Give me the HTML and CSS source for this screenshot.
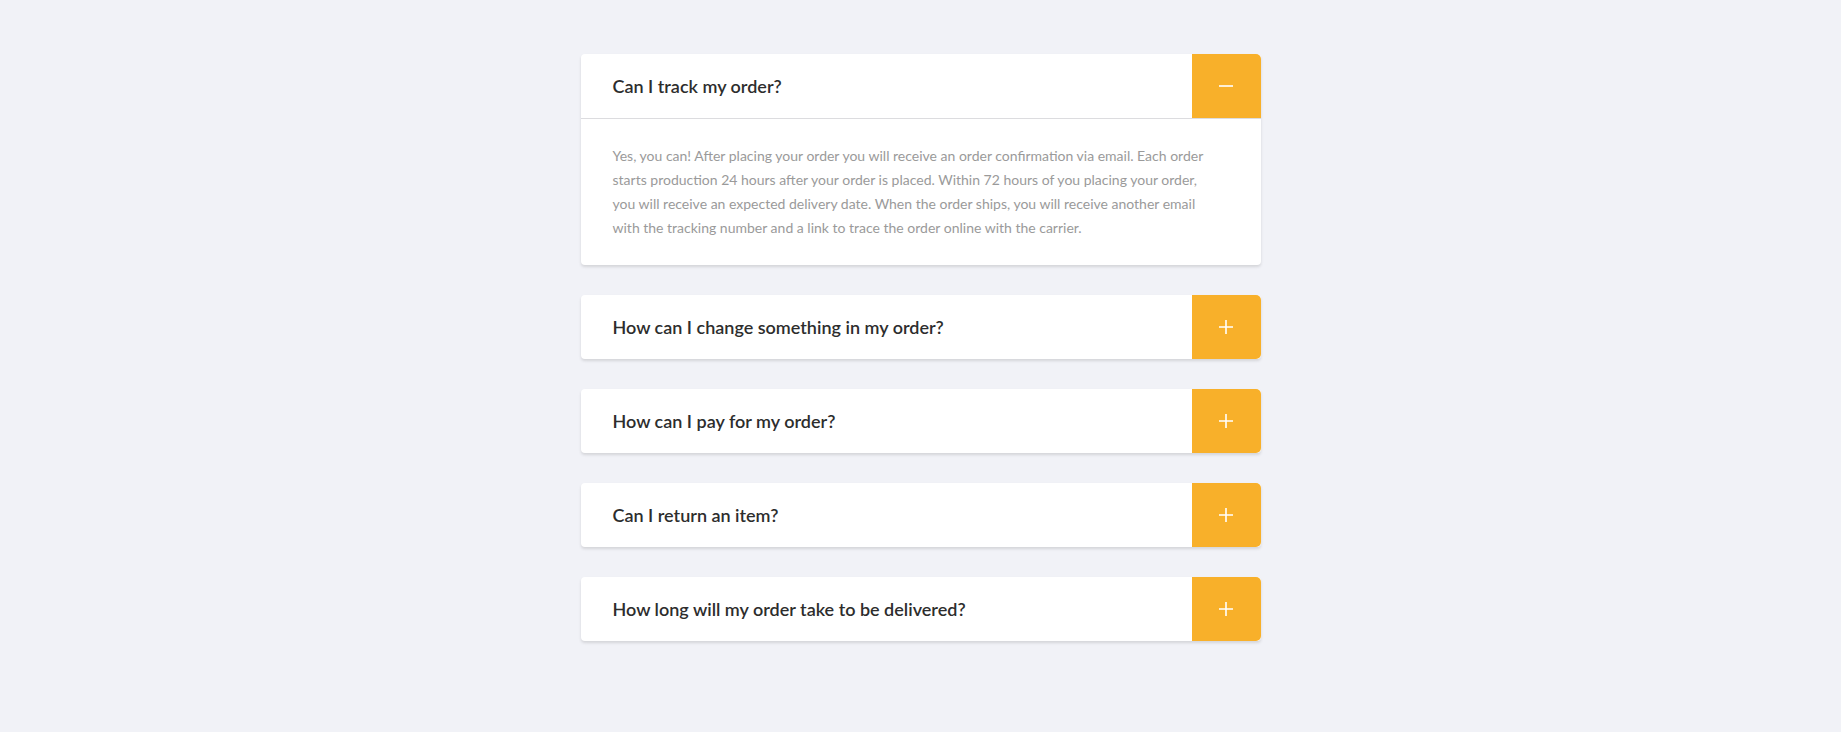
FILE: index.html
```html
<!DOCTYPE html>
<html lang="en">
<head>
<meta charset="utf-8">
<title>FAQ</title>
<link rel="stylesheet" href="styles.css">
</head>
<body>
<main class="faq">
  <section class="card open">
    <div class="card-head">
      <h3 class="q">Can I track my order?</h3>
      <button class="toggle" aria-label="Collapse">
        <svg width="14" height="14" viewBox="0 0 14 14"><path d="M0 7h14" stroke="#fff" stroke-width="1.6"/></svg>
      </button>
    </div>
    <div class="card-body">
      <p>Yes, you can! After placing your order you will receive an order confirmation via email. Each order starts production 24 hours after your order is placed. Within 72 hours of you placing your order, you will receive an expected delivery date. When the order ships, you will receive another email with the tracking number and a link to trace the order online with the carrier.</p>
    </div>
  </section>
  <section class="card">
    <div class="card-head">
      <h3 class="q">How can I change something in my order?</h3>
      <button class="toggle" aria-label="Expand">
        <svg width="14" height="14" viewBox="0 0 14 14"><path d="M0 7h14M7 0v14" stroke="#fff" stroke-width="1.6"/></svg>
      </button>
    </div>
  </section>
  <section class="card">
    <div class="card-head">
      <h3 class="q">How can I pay for my order?</h3>
      <button class="toggle" aria-label="Expand">
        <svg width="14" height="14" viewBox="0 0 14 14"><path d="M0 7h14M7 0v14" stroke="#fff" stroke-width="1.6"/></svg>
      </button>
    </div>
  </section>
  <section class="card">
    <div class="card-head">
      <h3 class="q">Can I return an item?</h3>
      <button class="toggle" aria-label="Expand">
        <svg width="14" height="14" viewBox="0 0 14 14"><path d="M0 7h14M7 0v14" stroke="#fff" stroke-width="1.6"/></svg>
      </button>
    </div>
  </section>
  <section class="card">
    <div class="card-head">
      <h3 class="q">How long will my order take to be delivered?</h3>
      <button class="toggle" aria-label="Expand">
        <svg width="14" height="14" viewBox="0 0 14 14"><path d="M0 7h14M7 0v14" stroke="#fff" stroke-width="1.6"/></svg>
      </button>
    </div>
  </section>
</main>
</body>
</html>
```
FILE: styles.css
```css
* { box-sizing: border-box; }
html, body { margin: 0; padding: 0; }
body {
  background: #f1f2f7;
  font-family: Lato, "Open Sans", sans-serif;
  min-height: 732px;
}
.faq {
  width: 680px;
  margin: 54px auto 0;
  display: flex;
  flex-direction: column;
  gap: 30px;
}
.card {
  background: #fff;
  border-radius: 4px;
  box-shadow: 0 2px 3px rgba(0, 0, 0, 0.12);
}
.card-head {
  display: flex;
  align-items: stretch;
  height: 64px;
}
.open .card-head {
  height: 65px;
  border-bottom: 1px solid #dcdcdf;
}
.q {
  flex: 1;
  margin: 0;
  padding-left: 32px;
  display: flex;
  align-items: center;
  font-size: 18px;
  font-weight: 600;
  color: #2d2d2d;
}
.toggle {
  width: 69px;
  flex: none;
  border: 0;
  padding: 0;
  margin: 0;
  background: #f8b02a;
  border-radius: 0 5px 5px 0;
  display: flex;
  align-items: center;
  justify-content: center;
}
.open .toggle {
  border-radius: 0 5px 0 0;
  height: 64px;
}
.card-body {
  padding: 25px 32px 25px;
}
.card-body p {
  margin: 0;
  max-width: 596px;
  font-size: 14px;
  line-height: 24px;
  color: #9a9a9a;
}
```
